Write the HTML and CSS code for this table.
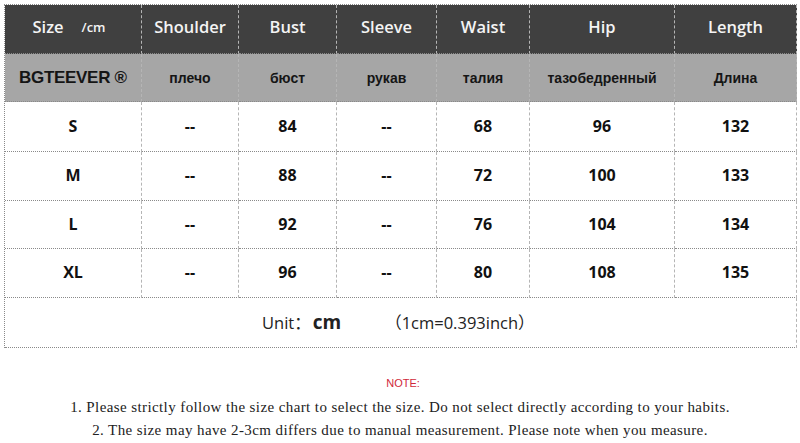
FILE: index.html
```html
<!DOCTYPE html>
<html>
<head>
<meta charset="utf-8">
<link rel="stylesheet" href="styles.css">
</head>
<body>
<div class="chart">
  <div class="cell head"><span class="size">Size</span><span class="unit-small">/cm</span></div>
  <div class="cell head">Shoulder</div>
  <div class="cell head">Bust</div>
  <div class="cell head">Sleeve</div>
  <div class="cell head">Waist</div>
  <div class="cell head">Hip</div>
  <div class="cell head">Length</div>

  <div class="cell sub brand">BGTEEVER ®</div>
  <div class="cell sub">плечо</div>
  <div class="cell sub">бюст</div>
  <div class="cell sub">рукав</div>
  <div class="cell sub">талия</div>
  <div class="cell sub">тазобедренный</div>
  <div class="cell sub">Длина</div>

  <div class="cell data">S</div><div class="cell data">--</div><div class="cell data">84</div><div class="cell data">--</div><div class="cell data">68</div><div class="cell data">96</div><div class="cell data">132</div>
  <div class="cell data">M</div><div class="cell data">--</div><div class="cell data">88</div><div class="cell data">--</div><div class="cell data">72</div><div class="cell data">100</div><div class="cell data">133</div>
  <div class="cell data">L</div><div class="cell data">--</div><div class="cell data">92</div><div class="cell data">--</div><div class="cell data">76</div><div class="cell data">104</div><div class="cell data">134</div>
  <div class="cell data">XL</div><div class="cell data">--</div><div class="cell data">96</div><div class="cell data">--</div><div class="cell data">80</div><div class="cell data">108</div><div class="cell data">135</div>

  <div class="cell unit-row"><span class="unit-label">Unit：</span><span class="unit-cm">cm</span><span class="unit-conv">（1cm=0.393inch）</span></div>
</div>
<div class="notes">
  <p class="note-title">NOTE:</p>
  <p class="note-line">1. Please strictly follow the size chart to select the size. Do not select directly according to your habits.</p>
  <p class="note-line">2. The size may have 2-3cm differs due to manual measurement. Please note when you measure.</p>
</div>
</body>
</html>
```
FILE: styles.css
```css
* { box-sizing: border-box; }
html, body { margin: 0; padding: 0; background: #fff; }
body { width: 800px; height: 443px; overflow: hidden; }

.chart {
  margin: 4px 0 0 4px;
  width: 793px;
  display: grid;
  grid-template-columns: 137px 97px 98px 100px 93px 145px 122px;
  grid-template-rows: 49px 48px 50px 49px 48px 49px 50px;
  border-left: 1px dotted #8a8a8a;
  border-top: 1px dotted #8a8a8a;
}

.cell {
  display: flex;
  align-items: center;
  justify-content: center;
  border-right: 1px dashed #b5b5b5;
  border-bottom: 1px dotted #8a8a8a;
  color: #111;
}

.head {
  background: #404040;
  color: #f4f4f4;
  font-family: "Open Sans", "DejaVu Sans", sans-serif;
  font-weight: 600;
  font-size: 16.5px;
  padding-bottom: 5px;
}
.head .size { margin-right: 18px; margin-left: -8px; }
.head .unit-small { font-size: 13px; }

.sub {
  background: #a6a6a6;
  font-family: "Liberation Sans", Arial, sans-serif;
  font-weight: 700;
  font-size: 14px;
  color: #151515;
}
.sub.brand {
  font-size: 17px;
  letter-spacing: -0.3px;
  justify-content: flex-start;
  padding-left: 14px;
}

.data {
  font-family: "Open Sans", "DejaVu Sans", sans-serif;
  font-weight: 700;
  font-size: 16px;
  color: #111;
  padding-bottom: 2px;
}

.unit-row {
  grid-column: 1 / 8;
  font-family: "Open Sans", "Noto Sans CJK SC", sans-serif;
  color: #222;
  justify-content: flex-start;
  padding-left: 257px;
  padding-bottom: 2px;
}
.unit-label { font-size: 16.5px; margin-right: 2px; }
.unit-cm { font-weight: 700; font-size: 19px; margin-right: 44px; }
.unit-conv { font-size: 16.5px; }

.notes {
  text-align: center;
  font-family: "Liberation Serif", "Times New Roman", serif;
  margin-top: 26px;
}
.notes p { margin: 0; }
.note-title {
  font-family: "Liberation Sans", Arial, sans-serif;
  color: #d0283a;
  font-size: 11px;
  line-height: 18px;
  margin-bottom: 4px !important;
  padding-left: 6px;
}
.note-line {
  font-size: 15px;
  letter-spacing: 0.4px;
  line-height: 23px;
  color: #222;
}
```
